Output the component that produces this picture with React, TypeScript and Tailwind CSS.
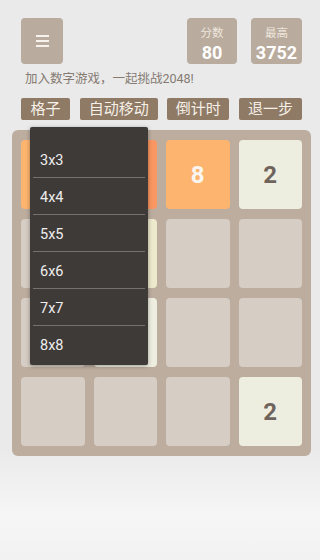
import React from "react";

const font = { fontFamily: 'Roboto, "Noto Sans CJK SC", "Noto Sans", sans-serif' };

const E = "bg-[#d6cdc4]";

const cells: { v: number | null; cls: string }[] = [
  { v: null, cls: "bg-[#fdb46e] text-[#f9f6f2]" },
  { v: null, cls: "bg-[#f99661] text-[#f9f6f2]" },
  { v: 8, cls: "bg-[#fdb46e] text-[#f9f6f2]" },
  { v: 2, cls: "bg-[#eeeee0] text-[#6e645c]" },
  { v: null, cls: E },
  { v: null, cls: "bg-[#ece9cc] text-[#6e645c]" },
  { v: null, cls: E },
  { v: null, cls: E },
  { v: null, cls: E },
  { v: null, cls: "bg-[#eeeee0] text-[#6e645c]" },
  { v: null, cls: E },
  { v: null, cls: E },
  { v: null, cls: E },
  { v: null, cls: E },
  { v: null, cls: E },
  { v: 2, cls: "bg-[#eeeee0] text-[#6e645c]" },
];

export default function App() {
  const sizes = ["3x3", "4x4", "5x5", "6x6", "7x7", "8x8"];
  return (
    <div
      className="w-[320px] h-[560px] overflow-hidden bg-[linear-gradient(to_bottom,#eaeaea_0%,#eaeaea_80%,#f6f6f6_92%,#f2f2f2_100%)]"
      style={font}
    >
      <div className="relative">
        {/* header */}
        <div className="flex items-start ml-[21px] w-[281px] pt-[18px]">
          <div className="w-[42px] h-[46px] rounded-[4px] bg-[#b9ab9d] flex flex-col items-center justify-center gap-[3px]">
            <div className="w-[13px] h-[2px] bg-[#f7f2ec]" />
            <div className="w-[13px] h-[2px] bg-[#f7f2ec]" />
            <div className="w-[13px] h-[2px] bg-[#f7f2ec]" />
          </div>
          <div className="flex-1" />
          <div className="w-[50px] h-[46px] rounded-[4px] bg-[#b9ab9d] flex flex-col items-center pt-[8px]">
            <div className="text-[11.5px] leading-[14px] text-[#efe7de]">分数</div>
            <div className="text-[18px] leading-[26px] font-bold text-white">80</div>
          </div>
          <div className="w-[51px] h-[46px] ml-[14px] rounded-[4px] bg-[#b9ab9d] flex flex-col items-center pt-[8px]">
            <div className="text-[11.5px] leading-[14px] text-[#efe7de]">最高</div>
            <div className="text-[18px] leading-[26px] font-bold text-white">3752</div>
          </div>
        </div>
        <div className="ml-[25px] mt-[7px] text-[12.5px] leading-[16px] text-[#857b72]">
          加入数字游戏，一起挑战2048!
        </div>
        <div className="flex justify-between ml-[21px] w-[281px] mt-[11px]">
          {["格子", "自动移动", "倒计时", "退一步"].map((t, i) => (
            <div
              key={t}
              className={
                "h-[22px] rounded-[2px] bg-[#8e7a65] text-[#f6f0e8] text-[15px] leading-[22px] flex items-center justify-center " +
                (i === 0 ? "w-[49px]" : i === 1 ? "w-[78px]" : i === 2 ? "w-[62px]" : "w-[63px]")
              }
            >
              {t}
            </div>
          ))}
        </div>
        {/* board */}
        <div className="ml-[12px] mt-[10px] w-[299px] h-[326px] rounded-[6px] bg-[#bcad9f] px-[9px] py-[10px] grid grid-cols-4 grid-rows-4 gap-x-[9px] gap-y-[10px]">
          {cells.map((c, i) => (
            <div
              key={i}
              className={"rounded-[4px] flex items-center justify-center text-[24px] font-bold " + c.cls}
            >
              {c.v ?? ""}
            </div>
          ))}
        </div>
        {/* dropdown */}
        <div className="absolute left-[30px] top-[127px] w-[118px] bg-[#3e3a38] rounded-[2px] shadow-[0_1px_4px_rgba(0,0,0,0.35)] pt-[14px] pb-[2px] px-[3px]">
          {sizes.map((s, i) => (
            <div
              key={s}
              className={
                "h-[37px] flex items-center pl-[7px] pt-[3px] text-[14.5px] text-[#eeeeee] " +
                (i < sizes.length - 1 ? "border-b border-[#75716e]" : "")
              }
            >
              {s}
            </div>
          ))}
        </div>
      </div>
    </div>
  );
}
